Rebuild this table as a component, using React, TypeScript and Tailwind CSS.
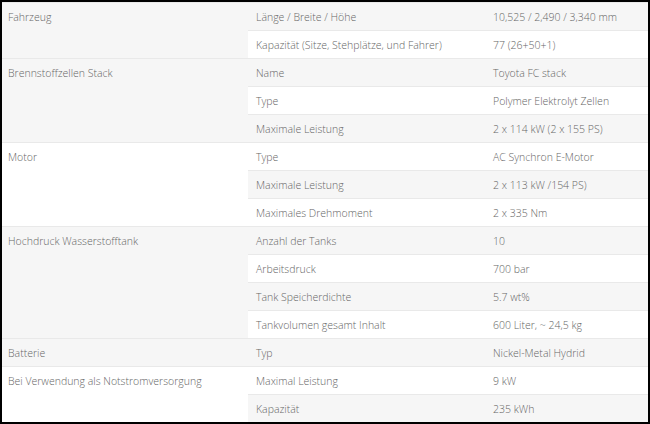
const groups = [
  {
    title: "Fahrzeug",
    rows: [
      ["Länge / Breite / Höhe", "10,525 / 2,490 / 3,340 mm"],
      ["Kapazität (Sitze, Stehplätze, und Fahrer)", "77 (26+50+1)"],
    ],
  },
  {
    title: "Brennstoffzellen Stack",
    rows: [
      ["Name", "Toyota FC stack"],
      ["Type", "Polymer Elektrolyt Zellen"],
      ["Maximale Leistung", "2 x 114 kW (2 x 155 PS)"],
    ],
  },
  {
    title: "Motor",
    rows: [
      ["Type", "AC Synchron E-Motor"],
      ["Maximale Leistung", "2 x 113 kW /154 PS)"],
      ["Maximales Drehmoment", "2 x 335 Nm"],
    ],
  },
  {
    title: "Hochdruck Wasserstofftank",
    rows: [
      ["Anzahl der Tanks", "10"],
      ["Arbeitsdruck", "700 bar"],
      ["Tank Speicherdichte", "5.7 wt%"],
      ["Tankvolumen gesamt Inhalt", "600 Liter, ~ 24,5 kg"],
    ],
  },
  {
    title: "Batterie",
    rows: [["Typ", "Nickel-Metal Hydrid"]],
  },
  {
    title: "Bei Verwendung als Notstromversorgung",
    rows: [
      ["Maximal Leistung", "9 kW"],
      ["Kapazität", "235 kWh"],
    ],
  },
];

export default function App() {
  let index = 0;
  return (
    <div className="w-[650px] h-[424px] border-2 border-black bg-white overflow-hidden font-['Open_Sans',sans-serif] font-light text-[10.5px] text-[#666666]">
      <table className="w-full border-collapse table-fixed">
        <colgroup>
          <col className="w-[246px]" />
          <col className="w-[238px]" />
          <col />
        </colgroup>
        <tbody>
          {groups.map((group) =>
            group.rows.map((row, i) => {
              const striped = index++ % 2 === 0;
              const bg = striped ? "bg-[#f6f6f6]" : "bg-white";
              return (
                <tr key={group.title + row[0]} className={`h-[28px] ${bg}`}>
                  {i === 0 && (
                    <td
                      rowSpan={group.rows.length}
                      className="align-top border-t border-[#e9e9e9] px-[6px] pt-[7px] pb-[5px] leading-[15px]"
                    >
                      {group.title}
                    </td>
                  )}
                  <td className="border-t border-[#e9e9e9] px-[8px] pt-[7px] pb-[5px] leading-[15px] whitespace-nowrap">
                    {row[0]}
                  </td>
                  <td className="border-t border-[#e9e9e9] px-[7px] pt-[7px] pb-[5px] leading-[15px] whitespace-nowrap">
                    {row[1]}
                  </td>
                </tr>
              );
            })
          )}
        </tbody>
      </table>
    </div>
  );
}
